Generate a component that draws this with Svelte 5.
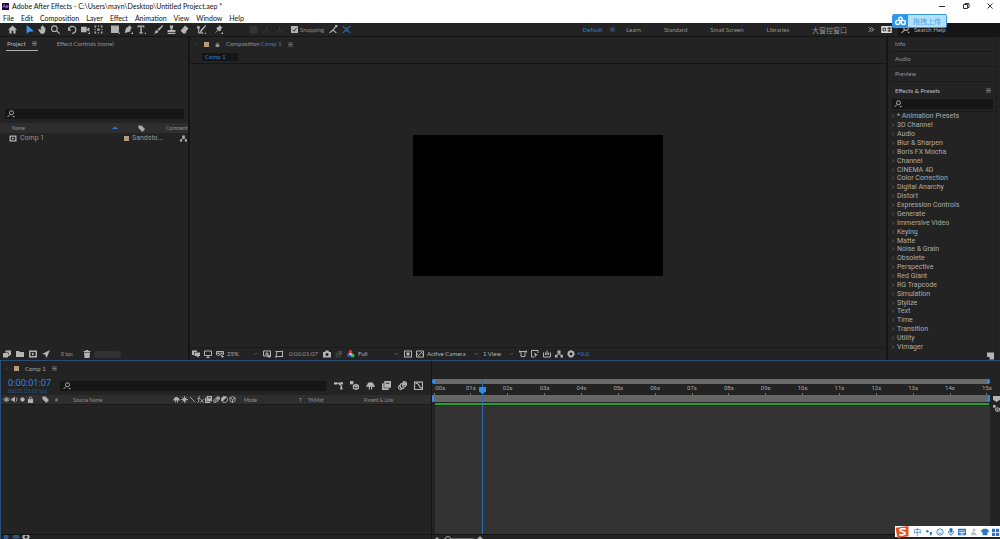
<script>
  // Each glyph lives on a 16-unit grid: f = filled outline, s = stroked outline.
  const icons = {
    home: { f: 'M8 1 0 8.500h2.500V15h4v-5h3v5h4V8.500H16z' },
    arrow: { f: 'M3 0v16l4-4 9-1z' },
    hand: { f: 'M5 9V3q1-1.500 2 0V1q1-1.500 2 0v2q1-1.500 2 0v2q1.500-1.500 2 0v6q-1 5-5 5-3 0-4-2L0 8q1-2 3 0z' },
    zoom: { s: 'M11 6.500a5 5 0 1 1-10 0 5 5 0 0 1 10 0zM10 10l5.500 5.500' },
    rotate: { s: 'M2 7a6 6 0 1 1 5 7.500', f: 'M0 3v7h6z' },
    camera: { f: 'M0 3h10v10H0zM10.500 7 15 4v8l-4.500-3zM12 16h4v-4z' },
    pan: { f: 'M1 1h3v2H3v2H1zM7 1h2v2H7zM12 1h3v4h-2V3h-1zM1 7h2v2H1zM13 7h2v2h-2zM1 11h2v2h1v2H1zM7 13h2v2H7zM13 11h2v4h-3v-2h1zM6 6h4v4H6z' },
    rect: { f: 'M1 2h12v11H1zM13 16h3v-3z', s: 'M1 2h12v11H1z' },
    pen: { f: 'M9 0l5 5-2 1.500-1 5L1 14l3-9 4-2zM12 16h4v-4z' },
    type: { f: 'M1 1h12v4h-1.500L11 3H8.500v10l2 .5V15H4v-1.500l2-.5V3H3l-.5 2H1zM13 16h3v-3z' },
    brush: { f: 'M15 0q2 1 0 3l-6 7-3-2zM5 9l3 3q-2 4-8 3 2-1 2-3t3-3z' },
    stamp: { f: 'M5 1h6v3L9.500 6v3H15v4H1V9h5.500V6L5 4zM1 14h14v2H1z' },
    eraser: { f: 'M9 1l6 5-6 8H5L1 10z', s: 'M5 14h6' },
    roto: { f: 'M15 0q2 1 0 3L9 10 7 8zM7 8l2 2q-1 4-4 3zM0 2h5v4H0zM13 16h3v-3z', s: 'M3 5v9h8' },
    pin: { f: 'M9 0l6 5-2 1-1 4-3 1-5-5 2-2 2-.5zM6 9 1 15l6-5zM12 16h4v-4z' },
    box: { f: 'M1 1h14v14H1z' },
    axis: { s: 'M8 2v7L2 14M8 9l6 5' },
    snapA: { s: 'M1 14l6-5 6 5M7 9l5-6', f: 'M11 0h4v4h-4z' },
    snapB: { s: 'M1 2l5 4M15 2l-5 4M1 14l5-4M15 14l-5-4M6 6h4v4H6z' },
    menu: { s: 'M1 3h14M1 8h14M1 13h14' },
    close: { s: 'M3 3l10 10M13 3 3 13' },
    lock: { f: 'M2 7h12v9H2z', s: 'M5 7V4q3-4 6 0v3' },
    search: { s: 'M13 5.500a4 4 0 1 1-8 0 4 4 0 0 1 8 0zM6 9l-5 5', f: 'M11 12h5l-2.500 3z' },
    up: { f: 'M0 12h16L8 5z' },
    down: { s: 'M3 6l5 5 5-5' },
    right: { s: 'M5 2l6 6-6 6' },
    tag: { f: 'M1 1h7l8 8-6 7-9-9z' },
    comp: { f: 'M0 1h16v14H0zM3 4v8h10V4z M6 5l5 3-5 3z' },
    flow: { f: 'M5 1h6v5H5zM0 10h5v5H0zM11 10h5v5h-5z', s: 'M8 6v3M3 11l2-3h6l2 3' },
    interpret: { f: 'M0 6h10v9H0zM5 1h11v9h-5V5H5z', s: 'M2 11h12' },
    folder: { f: 'M0 2h6l2 2h8v10H0z' },
    plane: { f: 'M16 0 0 8l6 1 3 7z' },
    trash: { f: 'M1 2h4l1-2h4l1 2h4v2H1zM2 5h12l-1 11H3z' },
    views: { f: 'M0 1h10v3H4v6H0zM5 5h11v7h-3v4l-4-4H5z' },
    monitor: { s: 'M1 2h14v9H1zM5 15h6M8 11v4' },
    mask: { s: 'M1 3h14v6q-4 4-7 0-3 4-7 0z', f: 'M3 5h4v3H3zM9 5h4v3H9zM10 12h6l-3 4z' },
    grid: { s: 'M1 2h14v10H1zM8 4v8M4 8h8M12 10v6M9 13h7' },
    region: { s: 'M4 3h11v10H2zM1 3h3M2 13v3M15 1v3M13 13h3' },
    snap: { f: 'M0 4h4l1-3h6l1 3h4v11H0zM8 6a3 3 0 1 0 .1 0z' },
    show: { f: 'M5 2h9v9H5zM1 6h3v7h8v2H1z' },
    fit: { f: 'M0 1h16v14H0zM2 3v10h12V3zM5 5h6v6H5z' },
    trans: { s: 'M1 2h14v12H1zM4 12l8-8M1 8h3M12 8h3' },
    par: { s: 'M0 3h16M4 3v10h8V3M1 1v4M15 1v4' },
    fast: { s: 'M14 6V1H1v13h6', f: 'M6 5l8 5-4 1-1 4z' },
    chart: { s: 'M1 5v9h14V5M5 10V5M8 10V1M11 10V5' },
    iris: { f: 'M8 0l6 3 1.500 6L11 15H5L.5 9 2 3zM8 5a3 3 0 1 0 .1 0z' },
    eye: { s: 'M1 8q7-8 14 0-7 8-14 0z', f: 'M8 5a3 3 0 1 0 .1 0z' },
    sound: { f: 'M1 5h3l5-4v14l-5-4H1z', s: 'M12 4q3 4 0 8' },
    dot: { f: 'M8 3a5 5 0 1 0 .1 0z' },
    shy: { f: 'M2 8a6 6 0 0 1 12 0h2v2h-5v5H9v-5H7v5H5v-5H0V8z' },
    sun: { f: 'M8 4a4 4 0 1 0 .1 0z', s: 'M8 0v16M0 8h16M3 3l10 10M13 3 3 13' },
    slash: { s: 'M2 2l12 12' },
    fx: { s: 'M7 1Q4 0 4 5v6q0 4-3 4M1 6h6M8 7l7 8M15 7l-7 8' },
    film: { f: 'M4 0h12v12H4zM0 4h3v9h9v3H0zM7 3v2h6V3z' },
    blur: { s: 'M10 1q6 0 5 6-3 5-6 3-2-6 1-9zM7 4Q2 7 5 12q3 2 6 0M4 7q-5 4-2 7 3 2 5 0', f: 'M9 3h5v5H9z' },
    half: { s: 'M8 1a7 7 0 1 0 .1 0z', f: 'M8 1a7 7 0 0 0-5 12L13 3q-2-2-5-2z' },
    cube: { s: 'M8 1l6 3v7l-6 4-6-4V4zM2 4l6 4 6-4M8 8v7' },
    mini: { s: 'M5 4h6M8 4l5 5v5', f: 'M0 2h6v4H0zM10 2h6v4h-6zM11 11h4v4h-4z' },
    draft: { s: 'M10 6l5 2v5l-4 2-5-2V8zM6 8l5 2 4-2M11 10v5', f: 'M0 0h6v6H0z' },
    graph: { s: 'M1 2h14v13H1zM3 4q5 0 6 4t5 5' },
    sheet: { f: 'M2 1h14v14H7V10H2z' },
    marker: { f: 'M0 2h16v9l-8 5-8-5z' }
  };

  const menus = ['File', 'Edit', 'Composition', 'Layer', 'Effect', 'Animation', 'View', 'Window', 'Help'];
  const toolGroups = [
    ['home'],
    ['arrow', 'hand', 'zoom'],
    ['rotate', 'camera', 'pan'],
    ['rect', 'pen', 'type'],
    ['brush', 'stamp', 'eraser'],
    ['roto'],
    ['pin']
  ];
  const workspaces = ['Learn', 'Standard', 'Small Screen', 'Libraries'];
  const effects = [
    '* Animation Presets', '3D Channel', 'Audio', 'Blur & Sharpen', 'Boris FX Mocha', 'Channel', 'CINEMA 4D',
    'Color Correction', 'Digital Anarchy', 'Distort', 'Expression Controls', 'Generate', 'Immersive Video',
    'Keying', 'Matte', 'Noise & Grain', 'Obsolete', 'Perspective', 'Red Giant', 'RG Trapcode', 'Simulation',
    'Stylize', 'Text', 'Time', 'Transition', 'Utility', 'Vimager'
  ];
  const seconds = Array.from({ length: 16 }, (_, i) => (i === 0 ? ':00s' : String(i).padStart(2, '0') + 's'));
  const switches = ['shy', 'sun', 'slash', 'fx', 'film', 'blur', 'half', 'cube'];
  let snapping = $state(true);
</script>

{#snippet icon(name)}
  <svg class="icon" viewBox="0 0 16 16" aria-hidden="true">
    {#if icons[name].f}<path class="f" fill-rule="evenodd" d={icons[name].f} />{/if}
    {#if icons[name].s}<path class="s" d={icons[name].s} />{/if}
  </svg>
{/snippet}

{#snippet tool(name, extra)}
  <button class="tool {extra ?? ''}" aria-label={name}>{@render icon(name)}</button>
{/snippet}

{#snippet pick(label, value, kind)}
  <span class="pick {kind}">
    <select aria-label={label}><option>{value}</option></select>
    {@render icon('down')}
  </span>
{/snippet}

<div class="app">
  <header class="title">
    <span class="logo">Ae</span>
    <h1>Adobe After Effects - C:\Users\mayn\Desktop\Untitled Project.aep *</h1>
    <div class="window">
      <button aria-label="Minimize"><svg viewBox="0 0 8 8"><path d="M1 4.500h6" /></svg></button>
      <button aria-label="Restore"><svg viewBox="0 0 8 8"><path d="M1.500 2.500h4v4h-4zM3 2.500v-1h4v4H5.500" /></svg></button>
      <button aria-label="Close"><svg viewBox="0 0 8 8"><path d="M1.500 1.500l5 5M6.500 1.500l-5 5" /></svg></button>
    </div>
  </header>

  <nav class="menus">
    {#each menus as m}<button>{m}</button>{/each}
  </nav>

  <div class="toolbar">
    {#each toolGroups as g}
      <div class="group">
        {#each g as t}{@render tool(t, t === 'arrow' ? 'on' : '')}{/each}
      </div>
    {/each}
    <div class="group faint">
      {@render tool('box')}{@render tool('axis')}{@render tool('axis')}
    </div>
    <label class="snapping">
      <span class="tick"><input type="checkbox" bind:checked={snapping} />
        {#if snapping}<svg viewBox="0 0 8 8"><path d="M1.500 4l2 2 3-4" /></svg>{/if}
      </span>
      Snapping
    </label>
    {@render tool('snapA')}{@render tool('snapB', 'blue')}
    <div class="spaces">
      <button class="current">Default {@render icon('menu')}</button>
      {#each workspaces as w}<button>{w}</button>{/each}
      <button class="custom">大窗控窗口</button>
      <button class="more" aria-label="More workspaces">
        <svg viewBox="0 0 8 8"><path d="M1 1.500l2.500 2.500L1 6.500M4 1.500l2.500 2.500L4 6.500" /></svg>
      </button>
      <button class="reset" aria-label="Reset workspace">
        <svg viewBox="0 0 12 8"><path fill="#ddd" d="M0 0h12v8H0z" /><path fill="none" stroke="#222" d="M2 2.500h3v3H2zM7 2.500h4M7 5.500h4M9 1v6" /></svg>
      </button>
    </div>
    <label class="help">{@render icon('search')}<input type="search" placeholder="Search Help" aria-label="Search Help" /></label>
  </div>

  <button class="upload">
    <span class="cloud">
      <svg viewBox="0 0 16 14"><g fill="none" stroke="#fff" stroke-width="2"><circle cx="8" cy="4" r="2.500" /><circle cx="4" cy="9" r="3" /><circle cx="12" cy="9" r="3" /></g></svg>
    </span>
    <span class="words">拖拽上传</span>
  </button>

  <main class="work">
    <section class="panel project">
      <div class="tabs">
        <button class="tab active">Project {@render icon('menu')}</button>
        <button class="tab">Effect Controls (none)</button>
      </div>
      <div class="preview"></div>
      <label class="search">{@render icon('search')}<input type="search" aria-label="Search project" /></label>
      <table>
        <thead>
          <tr>
            <th class="name">Name <span class="sort">{@render icon('up')}</span></th>
            <th class="label">{@render icon('tag')}</th>
            <th class="comment">Comment</th>
          </tr>
        </thead>
        <tbody>
          <tr>
            <td class="name"><span class="cell">{@render icon('comp')} Comp 1</span></td>
            <td class="label"><span class="cell"><i class="swatch"></i> Sandsto...</span></td>
            <td class="comment">{@render icon('flow')}</td>
          </tr>
        </tbody>
      </table>
      <div class="foot">
        {@render tool('interpret')}{@render tool('folder')}{@render tool('comp')}{@render tool('plane')}
        <span class="bpc">8 bpc</span>
        {@render tool('trash')}
        <span class="pill"></span>
      </div>
    </section>

    <section class="panel comp">
      <div class="tabs">
        <span class="x">{@render icon('close')}</span>
        <i class="swatch"></i>
        {@render icon('lock')}
        <span class="caption">Composition <b>Comp 1</b></span>
        {@render icon('menu')}
      </div>
      <div class="crumbs"><button>Comp 1</button></div>
      <div class="viewer"><div class="frame"></div></div>
      <div class="foot">
        {@render tool('views')}{@render tool('monitor')}{@render tool('mask')}
        {@render pick('Magnification', '25%', 'short')}
        {@render tool('grid')}{@render tool('region')}
        <span class="time">0:00:01:07</span>
        {@render tool('snap')}{@render tool('show', 'dim')}
        <button class="tool" aria-label="Channels">
          <svg class="icon" viewBox="0 0 16 16"><circle cx="7" cy="4" r="4" fill="#d33" /><circle cx="4" cy="10" r="4" fill="#35c" /><circle cx="11" cy="11" r="4" fill="#3b5" /><path fill="#ddd" d="M5 6h4v4H5z" /></svg>
        </button>
        {@render pick('Resolution', 'Full', 'mid')}
        {@render tool('fit')}{@render tool('trans')}
        {@render pick('Camera', 'Active Camera', 'wide')}
        {@render pick('Views', '1 View', 'short')}
        {@render tool('par')}{@render tool('fast')}{@render tool('chart')}{@render tool('flow')}
        {@render tool('iris')}
        <span class="exposure">+0.0</span>
      </div>
    </section>

    <aside class="side">
      <div class="stack">
        <button class="head">Info</button>
        <button class="head">Audio</button>
        <button class="head">Preview</button>
        <div class="head open"><span>Effects &amp; Presets</span>{@render icon('menu')}</div>
        <label class="search">{@render icon('search')}<input type="search" aria-label="Search effects" /></label>
        <ul>
          {#each effects as e}
            <li><button>{@render icon('right')}<span>{e}</span></button></li>
          {/each}
        </ul>
        <div class="foot">{@render tool('sheet')}</div>
      </div>
    </aside>
  </main>

  <section class="timeline">
    <div class="layers">
      <div class="tabs">
        <span class="x">{@render icon('close')}</span>
        <i class="swatch"></i>
        <span class="caption">Comp 1</span>
        {@render icon('menu')}
      </div>
      <div class="controls">
        <div class="clock"><strong>0:00:01:07</strong><small>00032 (25.00 fps)</small></div>
        <label class="search">{@render icon('search')}<input type="search" aria-label="Search layers" /></label>
        <div class="buttons">
          {@render tool('mini')}{@render tool('draft')}{@render tool('shy')}{@render tool('film')}{@render tool('blur')}{@render tool('graph')}
        </div>
      </div>
      <div class="columns">
        <span class="av">{@render icon('eye')}{@render icon('sound')}{@render icon('dot')}{@render icon('lock')}</span>
        <span class="num">{@render icon('tag')}<span>#</span></span>
        <span class="source">Source Name</span>
        <span class="switches">{#each switches as s}{@render icon(s)}{/each}</span>
        <span class="mode">Mode</span>
        <span class="t">T</span>
        <span class="trk">TrkMat</span>
        <span class="parent">Parent &amp; Link</span>
      </div>
      <div class="rows"></div>
      <div class="foot">{@render tool('dot', 'deep')}{@render tool('shy', 'deep')}{@render tool('iris')}</div>
    </div>

    <div class="track">
      <div class="nav"></div>
      <div class="ruler">
        {#each seconds as s}<span>{s}</span>{/each}
      </div>
      <div class="area"></div>
      <div class="cache"></div>
      <div class="canvas"></div>
      <div class="foot">
        <svg viewBox="0 0 60 6"><path fill="#aaa" d="M2 6l3-3 3 3zM44 6l4-4 4 4z" /><path fill="none" stroke="#666" d="M12 4.500h30" /><circle cx="16" cy="5" r="2.500" fill="#232323" stroke="#aaa" /></svg>
      </div>
      <div class="head-line">
        <svg viewBox="0 0 8 8"><path fill="#2f8be6" d="M0 0h8v5L4 8 0 5z" /></svg>
      </div>
    </div>
    <div class="edge">{@render icon('marker')}{@render icon('draft')}</div>
  </section>

  <div class="ime">
    <svg class="sogou" viewBox="0 0 16 14"><path fill="#e8501f" d="M0 2l15-2v12l-13 2z" /><path fill="none" stroke="#fff" stroke-width="2" d="M12 3.500q-7-1-7 1.500c0 2 6 1 6 3.500q0 2.500-7 1.500" /></svg>
    <span>中</span>
    <svg viewBox="0 0 10 10"><circle cx="3" cy="4" r="1.500" /><path d="M6 5h3l-1 4H6z" /></svg>
    <svg viewBox="0 0 10 10"><g fill="none" stroke="#2b74c4"><circle cx="5" cy="5" r="4" /><path d="M3 6q2 2 4 0M3.500 3v1M6.500 3v1" /></g></svg>
    <svg viewBox="0 0 10 10"><path d="M3 1q2-2 4 0v4q-2 2-4 0z" /><path fill="none" stroke="#2b74c4" d="M1.500 4q0 4 3.500 4t3.500-4M5 8v2" /></svg>
    <svg viewBox="0 0 10 10"><path fill-rule="evenodd" d="M0 1h10v8H0zM1 3v1h8V3zM1 5v1h8V5zM3 7v1h4V7z" /></svg>
    <svg viewBox="0 0 10 10"><g fill="#b8c4d2"><circle cx="5" cy="2.500" r="2" /><path d="M1 9q1-5 4-4t4 4z" /></g></svg>
    <svg viewBox="0 0 10 10"><path d="M3 1h4l3 2-1 3-1-1v4H2V5L1 6 0 3z" /></svg>
    <svg viewBox="0 0 10 10"><path d="M0 1h4v4H0zM5 1h4v4H5zM0 6h4v4H0zM5 6h4v4H5z" /></svg>
  </div>
</div>

<style>
  :global(body) { background: #232323; }
  .app {
    --bg: #232323;
    --line: #151515;
    --blue: #2f7fd6;
    position: relative;
    display: flex;
    flex-direction: column;
    height: 100vh;
    overflow: hidden;
    background: var(--bg);
    color: #949494;
    font: 6px/8px Lato, "Noto Sans CJK SC", sans-serif;
  }
  .app :global(*) { box-sizing: border-box; }
  button, input, select {
    margin: 0;
    padding: 0;
    border: 0;
    background: none;
    color: inherit;
    font: inherit;
    white-space: nowrap;
  }
  input { min-width: 0; outline: 0; }
  .icon { flex: none; display: block; width: 7px; height: 7px; }
  .f { fill: currentColor; }
  .s { fill: none; stroke: currentColor; stroke-width: 2; }

  .title { display: flex; align-items: center; flex: none; height: 12px; padding-left: 2px; background: #fff; color: #111; }
  .logo { width: 7px; height: 7px; background: #22003e; color: #b9a0ff; font-size: 5px; line-height: 7px; text-align: center; }
  h1 { margin: 0 auto 0 3px; font-weight: 400; font-size: 7px; line-height: 10px; }
  .window { display: flex; gap: 16px; padding-right: 6px; }
  .window svg { display: block; width: 8px; height: 8px; fill: none; stroke: #333; }
  .menus { display: flex; flex: none; gap: 7px; height: 11px; padding-left: 3px; background: #fff; color: #111; font-size: 7px; line-height: 10px; }

  .toolbar { display: flex; align-items: center; flex: none; height: 14px; padding-left: 6px; border-bottom: 1px solid var(--line); color: #aaa; }
  .group { display: flex; margin-right: 4px; }
  .tool { display: grid; place-items: center; flex: none; width: 13px; height: 12px; color: #b4b4b4; }
  .toolbar .icon { width: 9px; height: 9px; }
  .toolbar .on { color: #3a94f5; }
  .toolbar .blue { color: #2c66a8; }
  .faint { margin-left: 18px; margin-right: 5px; }
  .faint .tool { color: #343434; }
  .snapping { display: flex; align-items: center; gap: 2px; margin-right: 3px; color: #8c8c8c; }
  .tick { display: grid; width: 7px; height: 7px; background: #b4b4b4; }
  .tick input { grid-area: 1 / 1; appearance: none; }
  .tick svg { grid-area: 1 / 1; width: 7px; height: 7px; fill: none; stroke: #222; pointer-events: none; }
  .spaces { display: flex; align-items: center; gap: 23px; margin-left: auto; color: #949494; }
  .spaces button { flex: none; }
  .spaces .current { display: flex; align-items: center; gap: 8px; margin-right: -12px; color: var(--blue); }
  .spaces .current .icon { width: 5px; height: 5px; }
  .custom { font-size: 7px; }
  .more { margin-left: -2px; }
  .more svg { display: block; width: 7px; height: 7px; fill: none; stroke: #ccc; }
  .reset { margin-left: -17px; }
  .reset svg { display: block; width: 11px; height: 7px; }
  .help { display: flex; align-items: center; gap: 4px; width: 102px; height: 13px; margin-left: 6px; padding-left: 3px; background: #161616; }
  .help input { width: 80px; }
  .help input::placeholder { color: #aaa; opacity: 1; }

  .upload { position: absolute; top: 14px; right: 53px; display: flex; width: 55px; height: 14px; border: 1px solid #3a9be8; border-radius: 2px; overflow: hidden; background: #b5e0fc; color: #4aa6ea; }
  .cloud { display: grid; place-items: center; width: 15px; height: 12px; background: #2c98ec; }
  .cloud svg { width: 11px; height: 10px; }
  .words { flex: 1; font-size: 7px; line-height: 12px; text-align: center; }

  .work { display: grid; grid-template-columns: 190px minmax(0, 1fr) 112px; flex: 324 1 0; min-height: 0; }
  .panel, .side { display: flex; flex-direction: column; min-width: 0; min-height: 0; border-right: 2px solid var(--line); }
  .tabs { display: flex; align-items: center; flex: none; height: 14px; }
  .tabs .icon { width: 5px; height: 5px; }
  .project .tabs { gap: 18px; padding-left: 6px; }
  .tab { display: flex; align-items: center; gap: 6px; height: 13px; padding: 0 1px; }
  .active { border-bottom: 1px solid #b0b0b0; color: #b8b8b8; }
  .preview { flex: none; height: 58px; }
  .search { display: flex; align-items: center; flex: none; height: 10px; padding-left: 2px; background: #161616; color: #aaa; }
  .search .icon { width: 8px; height: 8px; }
  .search input { flex: 1; height: 8px; }
  .project .search { margin: 0 4px 4px 5px; }
  table { width: 100%; border-collapse: collapse; table-layout: fixed; }
  th, td { height: 10px; padding: 0; font-weight: 400; text-align: left; }
  td { height: 11px; }
  thead { background: #2e2e2e; font-size: 5px; }
  tbody { font: 7px/11px Roboto, sans-serif; }
  th.name { width: 118px; padding-left: 12px; }
  .sort { float: right; color: var(--blue); }
  .sort .icon { width: 6px; height: 7px; }
  td.name { padding-left: 9px; }
  .label { width: 48px; }
  th.label { padding-left: 20px; color: #aaa; }
  td.label { padding-left: 6px; }
  .comment { width: 22px; }
  td.comment { padding-left: 14px; color: #b4b4b4; }
  .cell { display: flex; align-items: center; gap: 3px; }
  .cell .icon { width: 8px; height: 7px; color: #b4b4b4; }
  .swatch { flex: none; width: 5px; height: 5px; background: #b39b7a; }
  .foot { display: flex; align-items: center; flex: none; height: 12px; margin-top: auto; }
  .foot .icon { width: 8px; height: 8px; }
  .bpc { width: 28px; padding-left: 9px; font-size: 5px; }
  .pill { width: 27px; height: 7px; margin-left: 1px; border-radius: 4px; background: #323232; }

  .comp .tabs { gap: 6px; padding-left: 5px; }
  .x { color: #666; }
  .comp .tabs .x .icon, .timeline .tabs .x .icon { width: 3px; height: 3px; }
  b { color: var(--blue); font-weight: 400; }
  .crumbs { flex: none; height: 13px; padding: 2px 0 0 12px; border-bottom: 1px solid var(--line); }
  .crumbs button { width: 36px; height: 8px; padding-left: 3px; background: #161616; color: var(--blue); text-align: left; }
  .viewer { display: grid; place-items: center; flex: 1; min-height: 0; }
  .frame { width: 36%; aspect-ratio: 16 / 9; background: #000; }
  .comp .foot { height: 13px; padding-bottom: 1px; border-top: 1px solid #1b1b1b; }
  .comp .tool { width: 12px; }
  .comp .dim { color: #444; }
  .pick { display: grid; flex: none; align-items: center; width: 35px; padding: 0 3px 0 1px; color: #b4b4b4; }
  .pick select { grid-area: 1 / 1; width: 100%; appearance: none; }
  .pick .icon { grid-area: 1 / 1; justify-self: end; width: 5px; height: 5px; color: #777; pointer-events: none; }
  .mid { width: 45px; }
  .wide { width: 56px; }
  .time { flex: none; width: 36px; padding-left: 4px; }
  .exposure { color: var(--blue); }

  .side { padding-left: 2px; border-right: 0; }
  .stack { display: flex; flex-direction: column; flex: 1; min-height: 0; margin-right: 3px; border-right: 1px solid #1b1b1b; }
  .head { display: flex; align-items: center; flex: none; height: 15px; padding-left: 5px; border-bottom: 1px solid #1a1a1a; text-align: left; }
  .open { justify-content: space-between; height: 17px; padding-right: 5px; border-bottom: 0; color: #b0b0b0; font-weight: 600; }
  .open .icon { width: 5px; height: 5px; }
  .side .search { margin: 0 3px 2px 2px; }
  ul { display: grid; grid-auto-rows: minmax(0, 1fr); flex: 1; min-height: 0; margin: 0; padding: 0; border-top: 1px solid #1a1a1a; list-style: none; }
  li { display: flex; align-items: center; min-height: 0; }
  li button { display: flex; align-items: center; gap: 2px; padding-left: 1px; color: #acacac; font: 7px/8px Roboto, sans-serif; }
  li .icon { width: 4px; height: 4px; color: #8a8a8a; }
  .side .foot { height: 9px; justify-content: flex-end; }

  .timeline { display: grid; grid-template-columns: 431px minmax(0, 1fr) 10px; flex: 178 1 0; min-height: 0; border-top: 1px solid #2c4e74; border-left: 1px solid #2c4e74; }
  .layers { display: flex; flex-direction: column; min-width: 0; border-right: 1px solid var(--line); }
  .timeline .tabs { gap: 6px; height: 15px; padding-left: 4px; color: #a8a8a8; }
  .controls { display: flex; align-items: center; flex: none; height: 19px; padding-left: 7px; }
  .clock { display: flex; flex-direction: column; flex: none; width: 50px; color: #2f8be6; }
  .clock strong { font: 9px/11px "Open Sans", sans-serif; }
  .clock small { color: #235890; font-size: 5px; line-height: 7px; }
  .controls .search { flex: 1; margin-left: 2px; padding-left: 3px; }
  .buttons { display: flex; gap: 3px; width: 105px; padding-left: 6px; }
  .buttons .icon { width: 9px; height: 9px; }
  .columns { display: flex; align-items: center; flex: none; height: 10px; padding-left: 2px; border-bottom: 1px solid #1b1b1b; background: #2e2e2e; font-size: 5px; }
  .columns .icon { width: 7px; height: 7px; color: #b0b0b0; }
  .av { display: flex; gap: 1px; width: 39px; }
  .num { display: flex; gap: 6px; width: 31px; }
  .source { width: 100px; }
  .switches { display: flex; gap: 1px; width: 71px; }
  .mode { width: 55px; }
  .t { width: 9px; }
  .trk { width: 56px; }
  .rows { flex: 1; min-height: 0; }
  .timeline .foot { height: 5px; border-top: 1px solid var(--line); overflow: hidden; }
  .layers .foot .tool { width: 10px; }
  .layers .foot .deep { color: #255a92; }

  .track { position: relative; display: flex; flex-direction: column; min-width: 0; }
  .nav { flex: none; height: 5px; margin-top: 18px; border: solid #2f8be6; border-width: 0 3px; border-radius: 2px; background: #6a6a6a; }
  .ruler { display: flex; justify-content: space-between; flex: none; height: 11px; padding: 0 3px 0 2px; color: #a8a8a8; font-family: Roboto, sans-serif; }
  .ruler span { display: flex; flex-direction: column; align-items: center; width: 0; height: 11px; white-space: nowrap; }
  .ruler span:first-child { align-items: flex-start; }
  .ruler span::after { content: ""; flex: none; width: 1px; height: 2px; margin-top: auto; background: #777; }
  .area { flex: none; height: 7px; border: solid #2f8be6; border-width: 0 2px; border-radius: 1px; background: #666; }
  .cache { flex: none; height: 2px; margin: 1px 1px 1px 3px; background: #1fa52a; }
  .canvas { flex: 1; min-height: 0; margin-left: 3px; background: #333; }
  .track .foot svg { width: 60px; height: 6px; }
  .head-line { position: absolute; top: 18px; bottom: 5px; left: 9%; width: 1px; background: #2d6cab; }
  .head-line svg { position: relative; left: -3px; top: 8px; display: block; width: 7px; height: 7px; }
  .edge { padding: 34px 0 0 3px; color: #b4b4b4; }
  .edge .icon { margin-bottom: 3px; }

  .ime { position: absolute; right: 0; bottom: 2px; display: flex; align-items: center; justify-content: space-between; width: 105px; height: 11px; background: #fff; color: #2b74c4; fill: #2b74c4; font: 8px/10px "Noto Sans CJK SC", sans-serif; }
  .ime svg { flex: none; width: 8px; height: 8px; }
  .ime .sogou { width: 15px; height: 12px; }
</style>
